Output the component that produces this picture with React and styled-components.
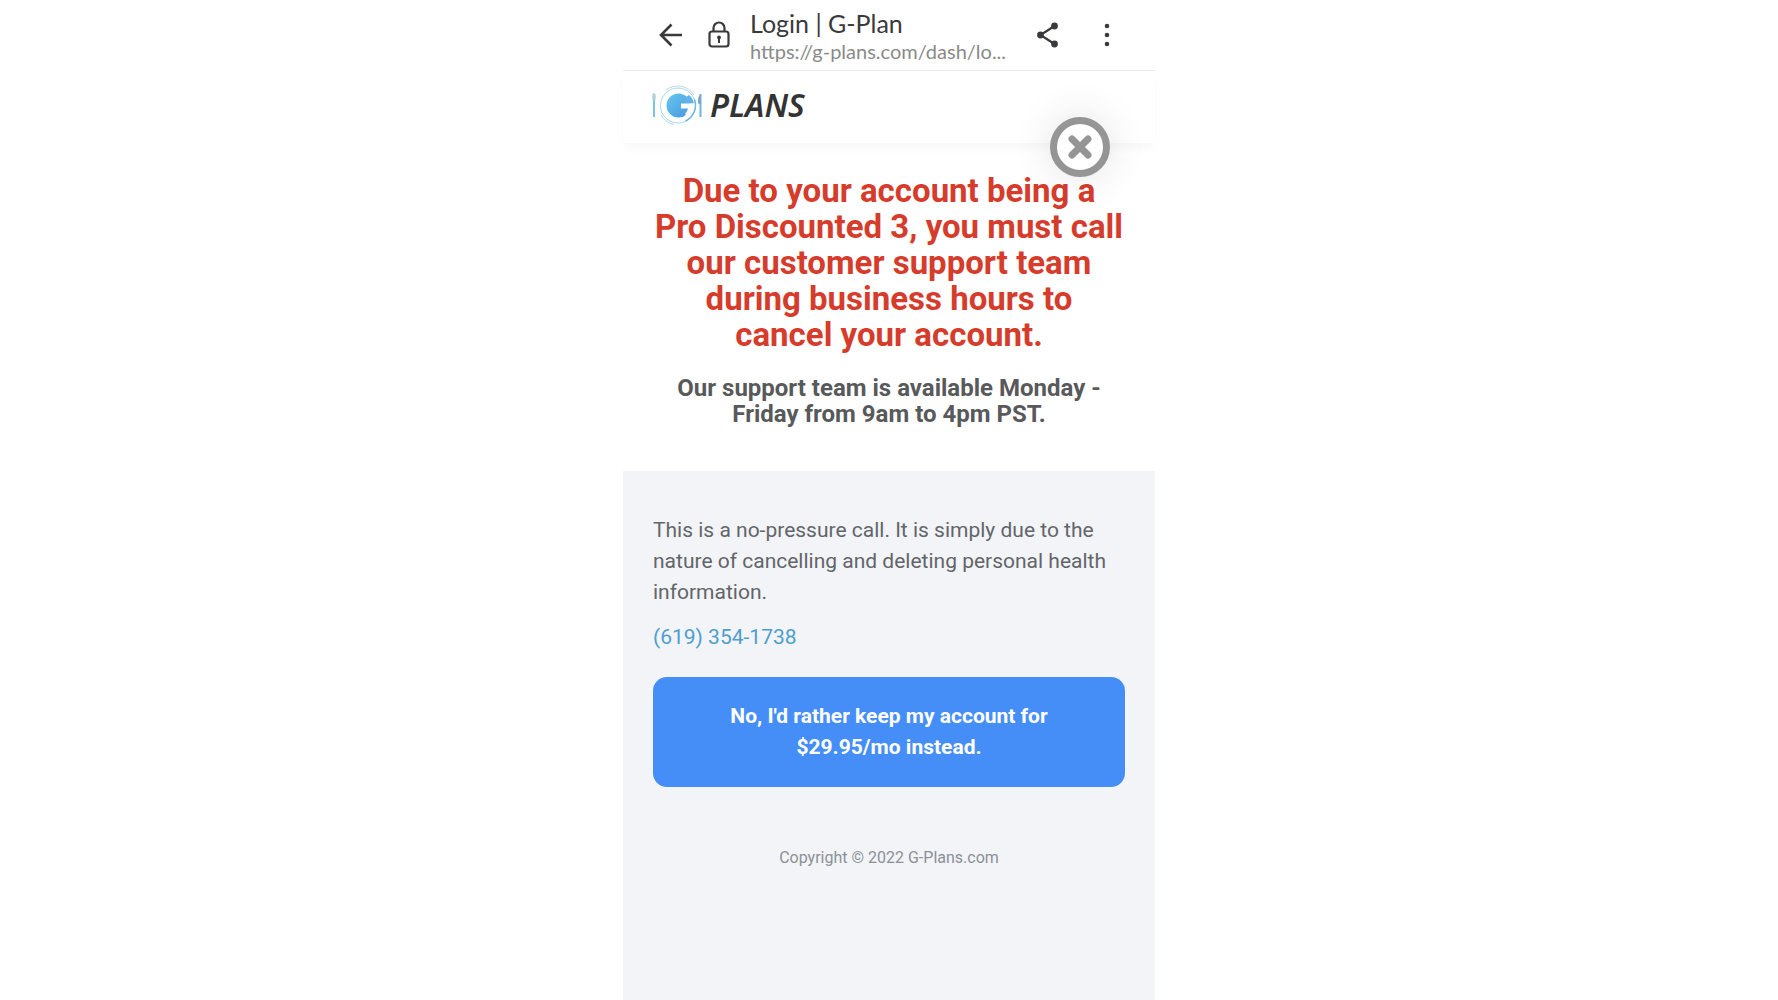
import React from "react";
import styled, { createGlobalStyle } from "styled-components";

const COLORS = {
  ink: "#3a3a3c",
  muted: "#8a8a8a",
  danger: "#d63c2b",
  heading: "#58595b",
  body: "#636569",
  link: "#4f9ece",
  primary: "#458ef8",
  panel: "#f2f4f8",
  footer: "#8b9097",
  close: "#959595",
};

const App = () => {
  return (
    <>
      <GlobalStyle />
      <Screen>
        <BrowserBar>
          <Actions $gap="26px">
            <IconButton aria-label="Back">
              <BackIcon />
            </IconButton>
            <IconButton aria-label="Site information">
              <LockIcon />
            </IconButton>
          </Actions>
          <PageInfo>
            <PageTitle>Login | G-Plan</PageTitle>
            <PageUrl>https://g-plans.com/dash/lo...</PageUrl>
          </PageInfo>
          <Actions $gap="44px">
            <IconButton aria-label="Share">
              <ShareIcon />
            </IconButton>
            <IconButton aria-label="More options">
              <MoreIcon />
            </IconButton>
          </Actions>
        </BrowserBar>
        <Header>
          <Brand href="#home" aria-label="G Plans">
            <PlateLogo />
            <BrandName>PLANS</BrandName>
          </Brand>
          <CloseButton aria-label="Close">
            <CloseIcon />
          </CloseButton>
        </Header>
        <Notice>
          <Title>
            Due to your account being a Pro&nbsp;Discounted 3, you must call our
            customer support team during business hours to cancel&nbsp;your
            account.
          </Title>
          <Hours>
            Our support team is available Monday - Friday from 9am to 4pm PST.
          </Hours>
        </Notice>
        <Panel>
          <Text>
            This is a no-pressure call. It is simply due to the nature of
            cancelling and deleting personal health information.
          </Text>
          <Phone href="tel:+16193541738">(619) 354-1738</Phone>
          <KeepButton>
            No, I'd rather keep my account for $29.95/mo instead.
          </KeepButton>
          <Footer>Copyright © 2022 G-Plans.com</Footer>
        </Panel>
      </Screen>
    </>
  );
};

const BackIcon = () => (
  <svg width="24" height="24" viewBox="0 0 24 24" fill="none">
    <path
      d="M24 12H3M13.500 1.500L3 12l10.500 10.500"
      stroke={COLORS.ink}
      strokeWidth="2.600"
    />
  </svg>
);

const LockIcon = () => (
  <svg width="22" height="28" viewBox="0 0 22 28" fill="none">
    <rect
      x="1.500"
      y="10.500"
      width="19"
      height="15"
      rx="2.500"
      stroke={COLORS.ink}
      strokeWidth="2.200"
    />
    <path
      d="M5.500 10.500V7a5.500 5.500 0 0 1 11 0v3.500"
      stroke={COLORS.ink}
      strokeWidth="2.200"
    />
    <circle cx="11" cy="16.500" r="1.900" fill={COLORS.ink} />
    <path d="M11 17v5" stroke={COLORS.ink} strokeWidth="2" />
  </svg>
);

const ShareIcon = () => (
  <svg width="24" height="26" viewBox="0 0 24 26">
    <path
      d="M18.500 4L4.500 13l14 9"
      fill="none"
      stroke={COLORS.ink}
      strokeWidth="2.200"
    />
    <circle cx="18.500" cy="4" r="3.400" fill={COLORS.ink} />
    <circle cx="4.500" cy="13" r="3.400" fill={COLORS.ink} />
    <circle cx="18.500" cy="22" r="3.400" fill={COLORS.ink} />
  </svg>
);

const MoreIcon = () => (
  <svg width="6" height="26" viewBox="0 0 6 26" fill={COLORS.ink}>
    <circle cx="3" cy="4" r="2.300" />
    <circle cx="3" cy="13" r="2.300" />
    <circle cx="3" cy="22" r="2.300" />
  </svg>
);

const CloseIcon = () => (
  <svg width="28" height="28" viewBox="0 0 28 28">
    <path
      d="M6 6l16 16M22 6L6 22"
      stroke={COLORS.close}
      strokeWidth="7"
      strokeLinecap="round"
    />
  </svg>
);

const PlateLogo = () => (
  <svg width="52" height="40" viewBox="0 0 52 40" fill="none">
    <defs>
      <linearGradient id="plate" x1="0" y1="0" x2="1" y2="1">
        <stop offset="0" stopColor="#66c6f0" />
        <stop offset="1" stopColor="#4a98e0" />
      </linearGradient>
    </defs>
    {/* rim */}
    <circle cx="27" cy="20.500" r="17.500" stroke="#a6d9e8" strokeWidth="1" />
    <path d="M15 5a19 19 0 0 1 28 5" stroke="#bcd8da" strokeWidth="1" />
    <path d="M10 30a19.500 19.500 0 0 0 13 9.500" stroke="#b4dde6" strokeWidth="1" />
    <path
      d="M43.500 14.500a17.500 17.500 0 0 1-9 21.500"
      stroke="#6bb7dd"
      strokeWidth="1.500"
    />
    {/* food */}
    <circle cx="27.500" cy="20.500" r="12" fill="url(#plate)" />
    <path d="M33 13.500l5-3.500q4 3.500 5 8.500h-9z" fill="#5eb3e8" />
    <path
      d="M30 18.500h13.500q0 8.500-6 13.500l-3.500-3q2.500-2.500 3-5.500h-7z"
      fill="#fff"
    />
    {/* fork and knife */}
    <ellipse cx="3" cy="12" rx="1.800" ry="4" fill="#b4d3d8" />
    <path d="M3 15v17" stroke="#78c3e2" strokeWidth="2" />
    <path d="M49.500 9v23" stroke="#6fb4dc" strokeWidth="2" />
    <path d="M49.500 9c-3 3-3 7-2 10h2z" fill="#7da9bb" />
  </svg>
);

const GlobalStyle = createGlobalStyle`
  *, *::before, *::after {
    box-sizing: border-box;
  }
  body {
    margin: 0;
    background: #fff;
    font-family: Roboto, "Liberation Sans", sans-serif;
  }
  h1, h2, p {
    margin: 0;
  }
  button {
    font-family: inherit;
    border: none;
    cursor: pointer;
  }
  svg {
    display: block;
    flex-shrink: 0;
  }
`;

const Screen = styled.div`
  display: flex;
  flex-direction: column;
  max-width: 532px;
  min-height: 100vh;
  margin: 0 auto;
`;

const BrowserBar = styled.div`
  display: flex;
  align-items: center;
  gap: 20px;
  padding: 7px 45px 7px 35px;
  border-bottom: 1px solid #ececec;
`;

const Actions = styled.div`
  display: flex;
  align-items: center;
  gap: ${(props) => props.$gap};
`;

const IconButton = styled.button`
  display: flex;
  padding: 0;
  background: none;
`;

const PageInfo = styled.div`
  flex: 1;
  min-width: 0;
  font-family: Lato, sans-serif;
  white-space: nowrap;
`;

const PageTitle = styled.p`
  color: ${COLORS.ink};
  font-size: 25px;
  line-height: 32px;
`;

const PageUrl = styled.p`
  color: ${COLORS.muted};
  font-size: 20px;
  line-height: 24px;
`;

const Header = styled.header`
  position: relative;
  padding: 14px 28px;
  box-shadow: 0 6px 10px -2px rgba(0, 0, 0, 0.04);
`;

const Brand = styled.a`
  display: inline-flex;
  align-items: center;
  gap: 7px;
  color: #333;
  text-decoration: none;
`;

const BrandName = styled.span`
  font-family: "Noto Sans", sans-serif;
  font-size: 32px;
  font-style: italic;
  font-weight: 600;
  line-height: 40px;
`;

const CloseButton = styled.button`
  position: absolute;
  right: 45px;
  bottom: -34px;
  display: flex;
  align-items: center;
  justify-content: center;
  width: 60px;
  height: 60px;
  padding: 0;
  background: #fff;
  border: 7px solid ${COLORS.close};
  border-radius: 50%;
  box-shadow: 0 0 40px rgba(0, 0, 0, 0.12);
`;

const Notice = styled.section`
  padding: 30px 30px 44px;
  text-align: center;
`;

const Title = styled.h1`
  color: ${COLORS.danger};
  font-size: 33px;
  font-weight: 700;
  line-height: 36px;
`;

const Hours = styled.h2`
  margin-top: 22px;
  color: ${COLORS.heading};
  font-size: 24px;
  font-weight: 700;
  line-height: 26px;
`;

const Panel = styled.main`
  flex: 1;
  padding: 44px 30px;
  background: ${COLORS.panel};
`;

const Text = styled.p`
  color: ${COLORS.body};
  font-size: 21px;
  line-height: 31px;
`;

const Phone = styled.a`
  display: block;
  margin-top: 14px;
  color: ${COLORS.link};
  font-size: 21px;
  line-height: 31px;
  text-decoration: none;
`;

const KeepButton = styled.button`
  width: 100%;
  margin-top: 24px;
  padding: 24px 60px;
  background: ${COLORS.primary};
  border-radius: 14px;
  color: #fff;
  font-size: 21px;
  font-weight: 700;
  line-height: 31px;
`;

const Footer = styled.footer`
  margin-top: 60px;
  color: ${COLORS.footer};
  font-size: 16px;
  line-height: 22px;
  text-align: center;
`;

export default App;
